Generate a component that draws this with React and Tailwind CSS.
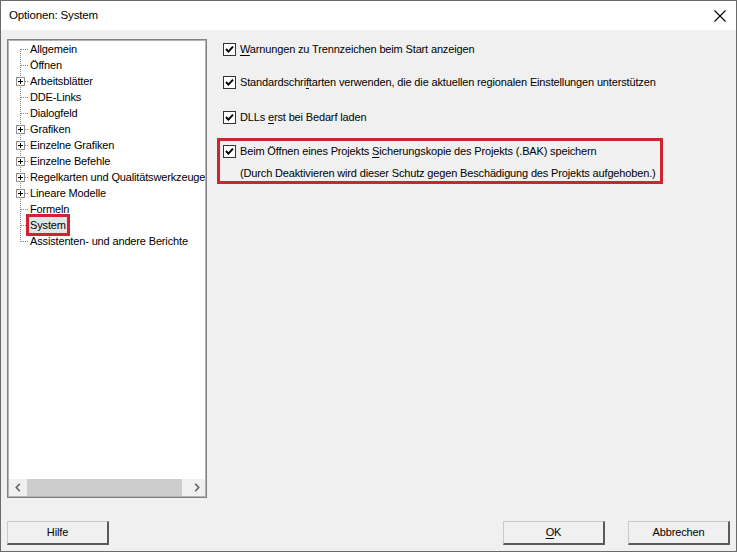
import React from "react";

function Check() {
  return (
    <svg width="13" height="13" viewBox="0 0 13 13" className="shrink-0" shapeRendering="crispEdges">
      <rect x="0.5" y="0.5" width="12" height="12" fill="#fff" stroke="#333" />
      <polyline points="3,6 5.4,8.6 10,3.6" fill="none" stroke="#000" strokeWidth="1.9" shapeRendering="auto" />
    </svg>
  );
}

const items = [
  { label: "Allgemein", first: true },
  { label: "Öffnen" },
  { label: "Arbeitsblätter", plus: true },
  { label: "DDE-Links" },
  { label: "Dialogfeld" },
  { label: "Grafiken", plus: true },
  { label: "Einzelne Grafiken", plus: true },
  { label: "Einzelne Befehle", plus: true },
  { label: "Regelkarten und Qualitätswerkzeuge", plus: true },
  { label: "Lineare Modelle", plus: true },
  { label: "Formeln" },
  { label: "System", selected: true },
  { label: "Assistenten- und andere Berichte", last: true },
];

function TreeRow({ label, plus, first, last, selected }) {
  return (
    <div className="flex h-[16px] items-center whitespace-nowrap">
      <svg width="20" height="16" className="shrink-0" shapeRendering="crispEdges">
        <line x1="11.5" y1={first ? 8 : 0} x2="11.5" y2={last ? 9 : 16} stroke="#8a8a8a" strokeDasharray="1 1" />
        <line x1="12" y1="8.5" x2="20" y2="8.5" stroke="#8a8a8a" strokeDasharray="1 1" />
        {plus && (
          <g>
            <rect x="7.5" y="4.5" width="8" height="8" fill="#fff" stroke="#8f8f8f" />
            <line x1="9" y1="8.5" x2="14" y2="8.5" stroke="#000" />
            <line x1="11.5" y1="6" x2="11.5" y2="11" stroke="#000" />
          </g>
        )}
      </svg>
      <span
        className={
          selected
            ? "inline-block h-[16px] leading-[16px] px-[1px] bg-[#e5e5e5] outline-3 outline-[#d1232f]"
            : "inline-block h-[16px] leading-[16px] px-[1px]"
        }
      >
        {label}
      </span>
    </div>
  );
}

function Btn({ children, className = "" }) {
  return (
    <div
      className={
        "w-[102px] h-[24px] flex items-center justify-center bg-[#f0f0f0] border-t border-l border-t-[#c9c9c9] border-l-[#c9c9c9] border-r-2 border-b-2 border-r-[#5a5a5a] border-b-[#5a5a5a] " +
        className
      }
    >
      {children}
    </div>
  );
}

export default function App() {
  return (
    <div className="w-[737px] h-[552px] flex flex-col bg-[#f0f0f0] border border-[#6a6a6a] font-['Liberation_Sans',Arial,sans-serif] text-[11px] tracking-[-0.15px] text-black overflow-hidden">
      <div className="h-[29px] shrink-0 bg-white flex items-center pl-[8px]">
        <span className="text-[11.5px]">Optionen: System</span>
        <svg width="12" height="12" viewBox="0 0 12 12" className="ml-auto mr-[10px]">
          <path d="M0.5 0.5 L11.5 11.5 M11.5 0.5 L0.5 11.5" stroke="#000" strokeWidth="1.1" />
        </svg>
      </div>

      <div className="flex-1 flex flex-col px-[6px]">
        <div className="flex mt-[9px] h-[459px]">
          <div className="w-[200px] h-full flex flex-col border border-[#828282] bg-white">
            <div className="flex-1 flex flex-col border border-[#b4b4b4] overflow-hidden">
              <div className="flex-1 flex flex-col overflow-hidden">
                {items.map((it) => (
                  <TreeRow key={it.label} {...it} />
                ))}
              </div>
              <div className="h-[17px] shrink-0 flex bg-[#f0f0f0]">
                <div className="w-[17px] flex items-center justify-center">
                  <svg width="6" height="9" viewBox="0 0 6 9">
                    <path d="M4.8 0.8 L1.3 4.5 L4.8 8.2" fill="none" stroke="#606060" strokeWidth="1.6" />
                  </svg>
                </div>
                <div className="flex-1 flex items-stretch">
                  <div className="ml-[1px] w-[155px] bg-[#cdcdcd]" />
                </div>
                <div className="w-[17px] flex items-center justify-center">
                  <svg width="6" height="9" viewBox="0 0 6 9">
                    <path d="M1.2 0.8 L4.7 4.5 L1.2 8.2" fill="none" stroke="#606060" strokeWidth="1.6" />
                  </svg>
                </div>
              </div>
            </div>
          </div>

          <div className="ml-[10px] flex flex-col">
            <div className="mt-[2px] h-[16px] flex items-center pl-[6px] gap-[4px] whitespace-nowrap">
              <Check />
              <span>
                <u className="underline-offset-[2px]">W</u>arnungen zu Trennzeichen beim Start anzeigen
              </span>
            </div>
            <div className="mt-[17px] h-[16px] flex items-center pl-[6px] gap-[4px] whitespace-nowrap">
              <Check />
              <span>
                Standardschri<u className="underline-offset-[2px]">f</u>tarten verwenden, die die aktuellen regionalen Einstellungen unterstützen
              </span>
            </div>
            <div className="mt-[19px] h-[16px] flex items-center pl-[6px] gap-[4px] whitespace-nowrap">
              <Check />
              <span>
                DLLs <u className="underline-offset-[2px]">e</u>rst bei Bedarf laden
              </span>
            </div>
            <div className="mt-[13px] w-[446px] h-[46px] border-3 border-[#d1232f] flex flex-col pl-[3px]">
              <div className="mt-[2px] h-[16px] flex items-center gap-[4px] whitespace-nowrap">
                <Check />
                <span>
                  Beim Öffnen eines Projekts <u className="underline-offset-[2px]">S</u>icherungskopie des Projekts (.BAK) speichern
                </span>
              </div>
              <div className="mt-[6px] h-[16px] flex items-center pl-[17px] whitespace-nowrap">
                (Durch Deaktivieren wird dieser Schutz gegen Beschädigung des Projekts aufgehoben.)
              </div>
            </div>
          </div>
        </div>

        <div className="mt-auto mb-[6px] flex">
          <Btn>Hilfe</Btn>
          <Btn className="ml-auto">
            <span>
              <u className="underline-offset-[2px]">O</u>K
            </span>
          </Btn>
          <Btn className="ml-[23px]">Abbrechen</Btn>
        </div>
      </div>
    </div>
  );
}
